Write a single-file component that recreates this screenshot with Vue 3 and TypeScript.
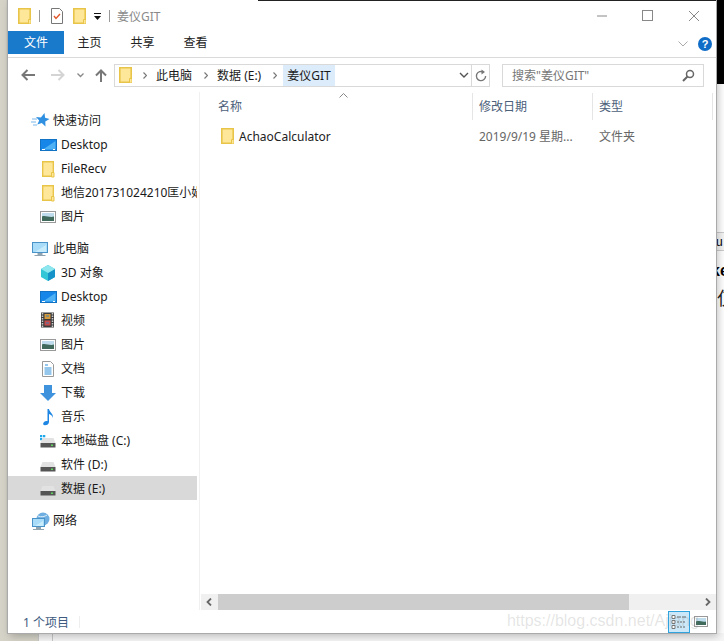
<template>
  <div class="desk">
    <div class="right-black"></div>
    <div class="bottom-strip">
      <i class="pane pane-a"></i>
      <i class="pane pane-b"></i>
    </div>
    <div class="behind">
      <div class="behind-line l1">u</div>
      <div class="behind-line l2">ke</div>
      <div class="behind-line l3">仅</div>
    </div>
    <div class="window">
      <div class="titlebar">
        <svg class="qa" width="13" height="16" viewBox="0 0 13 16"><use href="#folder" /></svg>
        <i class="qa-sep"></i>
        <svg class="qa qa-doc" width="12" height="16" viewBox="0 0 12 16">
          <path d="M.5 .5h8l3 3v12H.5z" fill="#fff" stroke="#777" />
          <path d="M3 8l2 2.500L9 6" fill="none" stroke="#e0562a" stroke-width="1.400" />
        </svg>
        <svg class="qa qa-second" width="13" height="16" viewBox="0 0 13 16"><use href="#folder" /></svg>
        <svg class="qa-drop" width="7" height="7" viewBox="0 0 7 7"><path d="M0 0h7v1H0zM0 3h7L3.500 7z" fill="#111" /></svg>
        <i class="qa-sep qa-sep-last"></i>
        <span class="title">姜仪GIT</span>
        <span class="spacer"></span>
        <div class="winbtns">
          <svg width="12" height="12" viewBox="0 0 12 12"><path d="M1 6h10" stroke="#888" /></svg>
          <svg width="12" height="12" viewBox="0 0 12 12"><rect x=".5" y=".5" width="10" height="10" fill="none" stroke="#888" /></svg>
          <svg width="12" height="12" viewBox="0 0 12 12"><path d="M1 1l10 10M11 1L1 11" stroke="#888" /></svg>
        </div>
      </div>

      <div class="ribbon">
        <span class="tab tab-file">文件</span>
        <span class="tab">主页</span>
        <span class="tab">共享</span>
        <span class="tab">查看</span>
        <span class="spacer"></span>
        <svg class="collapse" width="10" height="6" viewBox="0 0 10 6"><path d="M.5 .5l4.500 4.500 4.500-4.500" fill="none" stroke="#aaa" /></svg>
        <span class="help">?</span>
      </div>

      <div class="navbar">
        <svg class="nav" width="14" height="12" viewBox="0 0 14 12"><path d="M6.500 1L1.500 6l5 5M2 6h12" fill="none" stroke="#777" stroke-width="2" /></svg>
        <svg class="nav" width="14" height="12" viewBox="0 0 14 12"><path d="M7.500 1l5 5-5 5M12 6H0" fill="none" stroke="#d4d4d4" stroke-width="2" /></svg>
        <svg class="nav-drop" width="7" height="5" viewBox="0 0 7 5"><path d="M.5 .5l3 3 3-3" fill="none" stroke="#888" stroke-width="1.300" /></svg>
        <svg class="nav nav-up" width="12" height="13" viewBox="0 0 12 13"><path d="M1 6.500l5-5 5 5M6 2v11" fill="none" stroke="#777" stroke-width="2" /></svg>
        <div class="address">
          <svg class="addr-folder" width="13" height="16" viewBox="0 0 13 16"><use href="#folder" /></svg>
          <template v-for="(c, i) in crumbs" :key="c">
            <svg class="chev" width="4" height="7" viewBox="0 0 4 7"><path d="M.5 .5l3 3-3 3" fill="none" stroke="#777" stroke-width="1.200" /></svg>
            <span class="crumb" :class="{ current: i === crumbs.length - 1 }">{{ c }}</span>
          </template>
          <span class="spacer"></span>
          <svg class="addr-drop" width="10" height="6" viewBox="0 0 10 6"><path d="M1 1l4 4 4-4" fill="none" stroke="#555" stroke-width="1.400" /></svg>
          <span class="refresh">
            <svg width="12" height="13" viewBox="0 0 12 13"><path d="M8.500 3.200A4.600 4.600 0 1 0 10.600 7" fill="none" stroke="#777" stroke-width="1.400" /><path d="M6.500 .5v5l3.500-2.500z" fill="#777" /></svg>
          </span>
        </div>
        <div class="search">
          <span>搜索"姜仪GIT"</span>
          <svg width="13" height="13" viewBox="0 0 13 13"><circle cx="8" cy="5" r="3.500" fill="none" stroke="#666" stroke-width="1.500" /><path d="M5.500 7.500L1 12" stroke="#666" stroke-width="2" /></svg>
        </div>
      </div>

      <div class="body">
        <aside class="tree">
          <div v-for="n in nav" :key="n.label + n.icon" class="row" :class="[n.level === 0 ? 'top' : 'sub', { selected: n.selected, gap: n.gap }]">
            <svg class="tree-icon" width="20" height="20" viewBox="0 0 20 20" v-html="icons[n.icon]"></svg>
            <span class="row-label">{{ n.label }}</span>
          </div>
        </aside>

        <main class="list">
          <svg class="sort" width="9" height="5" viewBox="0 0 9 5"><path d="M.5 4.500l4-4 4 4" fill="none" stroke="#888" /></svg>
          <div class="cols">
            <span class="col c-name">名称</span>
            <span class="col c-date">修改日期</span>
            <span class="col c-type">类型</span>
          </div>
          <div class="file">
            <svg class="file-icon" width="13" height="16" viewBox="0 0 13 16"><use href="#folder" /></svg>
            <span class="f-name">AchaoCalculator</span>
            <span class="f-date">2019/9/19 星期...</span>
            <span class="f-type">文件夹</span>
          </div>
          <div class="grow"></div>
          <div class="hscroll">
            <svg class="arrow" width="6" height="8" viewBox="0 0 6 8"><path d="M5 .5L1.500 4 5 7.500" fill="none" stroke="#666" stroke-width="1.800" /></svg>
            <div class="thumb"></div>
            <svg class="arrow" width="6" height="8" viewBox="0 0 6 8"><path d="M1 .5L4.500 4 1 7.500" fill="none" stroke="#666" stroke-width="1.800" /></svg>
          </div>
        </main>
      </div>

      <div class="status">
        <span class="count">1 个项目</span>
        <i class="status-sep"></i>
        <span class="spacer"></span>
        <span class="view active">
          <svg width="16" height="16" viewBox="0 0 16 16">
            <path d="M1 1.500h3v3H1zM1 6.500h3v3H1zM1 11.500h3v3H1z" fill="#fff" stroke="#777" />
            <path d="M6 3h4M11 3h4M6 8h2M9 8h2M12 8h2M6 13h2M9 13h2M12 13h2" stroke="#666" />
          </svg>
        </span>
        <span class="view">
          <svg width="14" height="11" viewBox="0 0 14 11" v-html="picture"></svg>
        </span>
      </div>
      <span class="topline"></span>
      <span class="watermark">https://blog.csdn.net/Ajiang</span>
    </div>

    <svg width="0" height="0" class="defs">
      <symbol id="folder" viewBox="0 0 13 16">
        <path d="M.8 .8h11.400v14.400H.8z" fill="#ffe79a" stroke="#e8c548" stroke-width="1.600" />
        <path d="M10.500 11.500H13V16h-2.500z" fill="#ffe79a" stroke="#e8c548" />
      </symbol>
    </svg>
  </div>
</template>

<script setup lang="ts">
  interface NavItem {
    label: string
    icon: string
    level: number
    selected?: boolean
    gap?: boolean
  }

  const crumbs = ['此电脑', '数据 (E:)', '姜仪GIT']

  const picture =
    '<rect x=".5" y=".5" width="13" height="10" fill="#fff" stroke="#999"/><rect x="2" y="2" width="10" height="7" fill="#bfdcec"/><path d="M2 5.500c3-1.500 6 1 10 0V9H2z" fill="#3f6a5c"/>'
  const drive =
    '<path d="M4.500 8h11l2 5h-15z" fill="#e2e2e2"/><path d="M2.500 13h15v4.500h-15z" fill="#555"/><rect x="13" y="14.500" width="2" height="1.500" fill="#5fd35f"/>'
  const pc = (x: number, y: number, w: number, h: number, extra: string) =>
    `${extra}<rect x="${x + 0.5}" y="${y + 0.5}" width="${w}" height="${h}" fill="#a8dcf8" stroke="#4a93c8"/><path d="M${x + 3} ${y + h}L${x + w - 1} ${y + 3}v${h - 3}z" fill="#c8ecfc"/><rect x="${x + w / 2 - 2}" y="${y + h + 1}" width="5" height="2" fill="#8fa3b0"/><rect x="${x + w / 2 - 5}" y="${y + h + 3}" width="11" height="1" fill="#8fa3b0"/>`

  const icons: Record<string, string> = {
    star: '<path d="M14.500 3l.6 4.800 4.400 1.300-4.200 2.300.2 5.100-3.700-3.400-4.500 1.500 1.900-4.200L6 7l4.900.4z" fill="#2f8fe0"/><path d="M2 9h5M1 12h5M3 15h4" stroke="#7ab6e8"/>',
    desktop:
      '<rect x="2.500" y="5.500" width="16" height="11" fill="#1687e8" stroke="#1272c4"/><path d="M5 15.500L17.500 7v8.500z" fill="#4fb2f5"/><path d="M4 15.500h3M15 15.500h2" stroke="#fff"/>',
    folder:
      '<path d="M4.700 3.700h10.600v14.600H4.700z" fill="#ffe79a" stroke="#e8c548" stroke-width="1.400"/><path d="M13.500 14.500H16V19h-2.500z" fill="#ffe79a" stroke="#e8c548"/>',
    picture:
      '<rect x="2.500" y="5.500" width="15" height="11" fill="#fff" stroke="#999"/><rect x="4" y="7" width="12" height="8" fill="#bfdcec"/><path d="M4 10.500c3-1.500 8 1.500 12 0V15H4z" fill="#3f6a5c"/>',
    pc: pc(2, 4, 15, 10, ''),
    cube:
      '<path d="M10 3l7 4v8l-7 4-7-4V7z" fill="#32c6d6"/><path d="M10 11l7-4v8l-7 4z" fill="#1592c8"/><path d="M10 3l7 4-7 4-7-4z" fill="#8ee6ee"/>',
    video:
      '<rect x="3" y="2.500" width="13" height="15" fill="#3c3c3c"/><path d="M4.500 3v14M14.500 3v14" stroke="#ccc" stroke-width="1.500" stroke-dasharray="1.500 1"/><rect x="6.500" y="4" width="6" height="5" fill="#d69a3a"/><rect x="6.500" y="10.500" width="6" height="5" fill="#c64b4b"/><path d="M8 6h3M8 13h3" stroke="#3d7fb8"/>',
    doc:
      '<path d="M4.500 3.500h8l3 3v12h-11z" fill="#fff" stroke="#999"/><path d="M7 7h3M6.500 10h7M6.500 12h7M6.500 14h7M6.500 16h7" stroke="#2a8fd8"/>',
    down: '<path d="M6 3h8v8h4l-8 8-8-8h4z" fill="#3f92dc"/>',
    music:
      '<path d="M9.500 3h1.500c.3 3 4.500 4.500 4 9-.8-2.500-2.500-3.700-4-4v8c0 2-2 3.300-4 3.300S4.500 17.500 6 16c1-.9 2.500-1.200 3.500-.8z" fill="#1c86e2"/>',
    driveC: `<path d="M2 5h2.300v2.300H2zM5 5h2.300v2.300H5zM2 8h2.300v2.300H2zM5 8h2.300v2.300H5z" fill="#1fa8ec"/>${drive}`,
    drive,
    network: pc(
      2,
      8,
      12,
      8,
      '<circle cx="13" cy="9" r="6.500" fill="#6eaee0"/><path d="M8 6c3 1.500 7 .5 9-1" stroke="#dfeefa" fill="none"/>'
    )
  }

  const nav: NavItem[] = [
    { label: '快速访问', icon: 'star', level: 0 },
    { label: 'Desktop', icon: 'desktop', level: 1 },
    { label: 'FileRecv', icon: 'folder', level: 1 },
    { label: '地信201731024210匡小娟', icon: 'folder', level: 1 },
    { label: '图片', icon: 'picture', level: 1 },
    { label: '此电脑', icon: 'pc', level: 0, gap: true },
    { label: '3D 对象', icon: 'cube', level: 1 },
    { label: 'Desktop', icon: 'desktop', level: 1 },
    { label: '视频', icon: 'video', level: 1 },
    { label: '图片', icon: 'picture', level: 1 },
    { label: '文档', icon: 'doc', level: 1 },
    { label: '下载', icon: 'down', level: 1 },
    { label: '音乐', icon: 'music', level: 1 },
    { label: '本地磁盘 (C:)', icon: 'driveC', level: 1 },
    { label: '软件 (D:)', icon: 'drive', level: 1 },
    { label: '数据 (E:)', icon: 'drive', level: 1, selected: true },
    { label: '网络', icon: 'network', level: 0, gap: true }
  ]
</script>

<style>
  html,
  body {
    margin: 0;
    background: #fff;
  }
</style>

<style scoped>
  .desk {
    position: relative;
    width: 724px;
    height: 641px;
    overflow: hidden;
    background: linear-gradient(to right, #d5d3c8 0, #d5d3c8 6px, #b9b8b0 8px, #fff 8px);
    font-family: "Noto Sans", "Noto Sans CJK SC", sans-serif;
  }

  .right-black {
    position: absolute;
    top: 0;
    right: 0;
    width: 8px;
    height: 84px;
    background: #000;
  }

  .bottom-strip {
    position: absolute;
    left: 0;
    right: 0;
    bottom: 0;
    height: 8px;
    background: #f6f6f6;
  }

  .pane {
    position: absolute;
    top: 0;
    bottom: 0;
    border-right: 1px solid #c8c8c8;
  }

  .pane-a {
    left: 0;
    width: 38px;
    background: #d5d3c8;
  }

  .pane-b {
    left: 39px;
    width: 13px;
  }

  .behind {
    position: absolute;
    top: 232px;
    left: 716px;
    width: 8px;
    height: 401px;
    background: #fff;
    overflow: hidden;
    color: #000;
  }

  .behind-line {
    position: absolute;
    left: 0;
    font-family: "Liberation Sans", sans-serif;
    line-height: 1;
  }

  .l1 {
    top: 0;
    width: 8px;
    height: 19px;
    padding-top: 3px;
    box-sizing: border-box;
    font-size: 12px;
    background: #f4f4f4;
    border-top: 1px solid #ccc;
    border-bottom: 1px solid #ccc;
  }

  .l2 {
    top: 31px;
    left: -5px;
    font-size: 16px;
    font-weight: 700;
  }

  .l3 {
    top: 56px;
    left: 1px;
    font-size: 18px;
    color: #222;
    font-family: "Noto Sans CJK SC", sans-serif;
  }

  .window {
    position: absolute;
    top: 0;
    left: 8px;
    width: 708px;
    height: 633px;
    display: flex;
    flex-direction: column;
    background: #fff;
    box-shadow: 0 0 0 1px #aaa, 2px 3px 8px rgba(0, 0, 0, 0.25);
    color: #1a1a1a;
    font-size: 12px;
  }

  .topline {
    position: absolute;
    top: 0;
    left: 250px;
    right: 0;
    height: 1px;
    background: #222;
  }

  .spacer,
  .grow {
    flex: 1;
  }

  .defs {
    position: absolute;
  }

  .titlebar {
    height: 31px;
    display: flex;
    align-items: center;
    flex: none;
    padding-left: 10px;
  }

  .qa {
    flex: none;
  }

  .qa-sep {
    width: 1px;
    height: 12px;
    margin: 0 11px 0 8px;
    background: #999;
  }

  .qa-doc {
    margin-right: 10px;
  }

  .qa-second {
    margin-right: 8px;
  }

  .qa-drop {
    margin-top: 2px;
  }

  .qa-sep-last {
    margin: 0 7px 0 8px;
  }

  .title {
    color: #8a8a8a;
    font-size: 12px;
  }

  .winbtns {
    display: flex;
    gap: 34px;
    padding-right: 16px;
  }

  .ribbon {
    height: 27px;
    box-sizing: border-box;
    display: flex;
    align-items: flex-start;
    flex: none;
    border-bottom: 1px solid #dadada;
    padding-right: 4px;
  }

  .tab {
    width: 53px;
    text-align: center;
    font-size: 12px;
    line-height: 23px;
    color: #222;
  }

  .tab-file {
    width: 56px;
    margin-right: -1px;
    background: #1979ca;
    color: #fff;
  }

  .collapse {
    margin-top: 10px;
  }

  .help {
    width: 14px;
    height: 14px;
    margin: 6px 0 0 10px;
    border-radius: 50%;
    background: #0f6cc7;
    color: #fff;
    font: 700 11px/14px "Liberation Sans", sans-serif;
    text-align: center;
  }

  .navbar {
    height: 34px;
    display: flex;
    align-items: center;
    flex: none;
    padding-left: 13px;
    box-sizing: border-box;
  }

  .nav {
    flex: none;
    margin-right: 16px;
  }

  .nav-drop {
    flex: none;
    margin: 0 11px 0 -4px;
  }

  .nav-up {
    margin-right: 7px;
  }

  .address {
    width: 376px;
    height: 23px;
    box-sizing: border-box;
    border: 1px solid #d9d9d9;
    display: flex;
    align-items: center;
    padding-left: 4px;
    flex: none;
    margin-right: 12px;
  }

  .addr-folder {
    flex: none;
    margin-right: 11px;
  }

  .chev {
    flex: none;
    margin-right: 9px;
  }

  .crumb {
    margin-right: 12px;
    font-size: 12px;
    white-space: nowrap;
  }

  .crumb.current {
    height: 21px;
    line-height: 21px;
    margin: 0 0 0 -3px;
    padding: 0 4px;
    background: #dcecfb;
  }

  .addr-drop {
    margin-right: 2px;
  }

  .refresh {
    width: 17px;
    height: 21px;
    display: flex;
    align-items: center;
    justify-content: center;
    border-left: 1px solid #d9d9d9;
  }

  .search {
    width: 202px;
    height: 23px;
    box-sizing: border-box;
    border: 1px solid #d9d9d9;
    display: flex;
    align-items: center;
    justify-content: space-between;
    padding: 0 8px 0 9px;
    color: #777;
    font-size: 12px;
    flex: none;
  }

  .body {
    flex: 1;
    display: flex;
    min-height: 0;
  }

  .tree {
    width: 192px;
    flex: none;
    box-sizing: border-box;
    border-right: 1px solid #f0f0f0;
    padding-top: 16px;
  }

  .row {
    height: 24px;
    width: 189px;
    display: flex;
    align-items: center;
    box-sizing: border-box;
    white-space: nowrap;
    overflow: hidden;
    font-size: 12px;
    color: #1a1a1a;
  }

  .row.gap {
    margin-top: 8px;
  }

  .row.top {
    padding-left: 22px;
  }

  .row.sub {
    padding-left: 30px;
  }

  .row.selected {
    background: #d9d9d9;
  }

  .tree-icon {
    flex: none;
    margin-right: 3px;
  }

  .list {
    position: relative;
    flex: 1;
    min-width: 0;
    display: flex;
    flex-direction: column;
  }

  .sort {
    position: absolute;
    top: 1px;
    left: 139px;
  }

  .cols {
    display: flex;
    height: 28px;
    align-items: flex-end;
    flex: none;
    color: #4c607a;
    font-size: 12px;
  }

  .col {
    box-sizing: border-box;
    height: 27px;
    line-height: 27px;
    padding-left: 6px;
    border-right: 1px solid #e5e5e5;
  }

  .c-name {
    width: 273px;
    padding-left: 18px;
  }

  .c-date {
    width: 120px;
  }

  .c-type {
    width: 120px;
  }

  .file {
    height: 24px;
    margin-top: 4px;
    display: flex;
    align-items: center;
    flex: none;
    font-size: 12px;
  }

  .file-icon {
    margin: 0 5px 0 21px;
    flex: none;
  }

  .f-name {
    width: 240px;
    flex: none;
    color: #222;
  }

  .f-date {
    width: 120px;
    flex: none;
    color: #666;
  }

  .f-type {
    color: #666;
  }

  .hscroll {
    height: 16px;
    display: flex;
    align-items: center;
    justify-content: space-between;
    flex: none;
    background: #f0f0f0;
    position: relative;
    margin-left: 1px;
    padding: 0 5px;
  }

  .thumb {
    position: absolute;
    top: 0;
    left: 17px;
    width: 411px;
    height: 16px;
    background: #cdcdcd;
  }

  .status {
    height: 23px;
    display: flex;
    align-items: center;
    flex: none;
    color: #3d5a80;
    font-size: 12px;
    padding: 0 6px 0 15px;
  }

  .status-sep {
    width: 1px;
    height: 12px;
    margin-left: 10px;
    background: #eee;
  }

  .view {
    width: 18px;
    height: 22px;
    display: flex;
    align-items: center;
    justify-content: center;
    box-sizing: border-box;
    margin-left: 2px;
  }

  .view.active {
    width: 22px;
    background: #cce8f8;
    border: 1px solid #2ea3de;
  }

  .watermark {
    position: absolute;
    right: 17px;
    bottom: 0;
    font: 16px/24px "Liberation Sans", sans-serif;
    color: rgba(120, 120, 120, 0.2);
    pointer-events: none;
  }
</style>
